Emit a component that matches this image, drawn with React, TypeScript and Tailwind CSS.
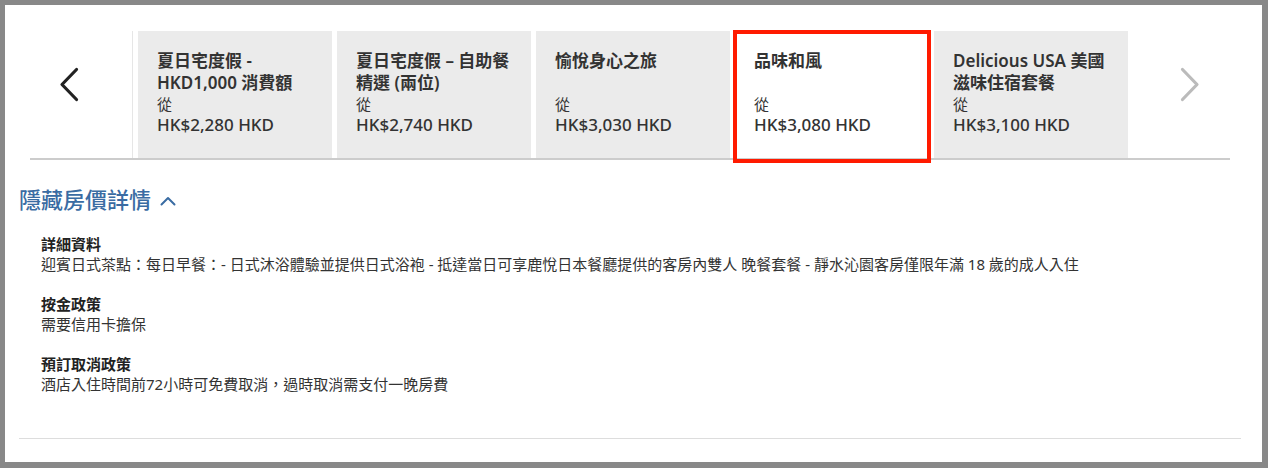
import React from 'react'

type Offer = {
  title: string
  price: string
  selected?: boolean
}

const offers: Offer[] = [
  { title: '夏日宅度假 - HKD1,000 消費額', price: 'HK$2,280 HKD' },
  { title: '夏日宅度假 – 自助餐精選 (兩位)', price: 'HK$2,740 HKD' },
  { title: '愉悅身心之旅', price: 'HK$3,030 HKD' },
  { title: '品味和風', price: 'HK$3,080 HKD', selected: true },
  { title: 'Delicious USA 美國滋味住宿套餐', price: 'HK$3,100 HKD' },
]

const details = [
  {
    label: '詳細資料',
    text: '迎賓日式茶點：每日早餐：- 日式沐浴體驗並提供日式浴袍 - 抵達當日可享鹿悅日本餐廳提供的客房內雙人 晚餐套餐 - 靜水沁園客房僅限年滿 18 歲的成人入住',
  },
  { label: '按金政策', text: '需要信用卡擔保' },
  { label: '預訂取消政策', text: '酒店入住時間前72小時可免費取消，過時取消需支付一晚房費' },
]

function Chevron({ dir, color }: { dir: 'left' | 'right'; color: string }) {
  const points = dir === 'left' ? '17.5,2.5 3,17.5 17.5,32.5' : '2.5,2.5 17,17.5 2.5,32.5'
  return (
    <svg width="20" height="35" viewBox="0 0 20 35" fill="none">
      <polyline points={points} stroke={color} strokeWidth="3.2" strokeLinecap="round" strokeLinejoin="round" />
    </svg>
  )
}

function OfferCard({ offer }: { offer: Offer }) {
  return (
    <div className={`relative w-[194px] h-[127px] shrink-0 pt-[19px] px-[19px] text-[#333] ${offer.selected ? 'bg-white' : 'bg-[#ebebeb]'}`}>
      <div className="h-[44px] text-[17px] leading-[22px] font-semibold">{offer.title}</div>
      <div className="text-[15px] leading-[20px]">從</div>
      <div className="text-[17px] leading-[22px] font-medium">{offer.price}</div>
      {offer.selected && (
        <div className="absolute -left-[2px] -top-[1px] w-[198px] h-[133px] border-4 border-[#ff1a00]"></div>
      )}
    </div>
  )
}

export default function App() {
  return (
    <div
      className="w-[1268px] h-[468px] bg-white border-[#888888] border-l-[5px] border-t-[5px] border-r-[6px] border-b-[6px] box-border"
      style={{ fontFamily: '"Noto Sans", "Noto Sans CJK TC", sans-serif' }}
    >
      {/* Offer carousel */}
      <div className="ml-[25px] mt-[26px] w-[1200px] flex border-b-2 border-[#cccccc]">
        <div className="w-[102px] pl-[29px] pt-[36px]">
          <Chevron dir="left" color="#222222" />
        </div>
        <div className="w-px bg-[#e6e6e6]"></div>
        <div className="ml-[5px] flex gap-[5px]">
          {offers.map((o) => (
            <OfferCard key={o.title} offer={o} />
          ))}
        </div>
        <div className="flex-1 pl-[52px] pt-[36px]">
          <Chevron dir="right" color="#bbbbbb" />
        </div>
      </div>

      {/* Rate details */}
      <div className="ml-[14px] mt-[24px]">
        <div className="flex items-center h-[30px] text-[22px] font-medium text-[#3a6ca3]">
          <span>隱藏房價詳情</span>
          <svg className="ml-[9px] mt-[3px]" width="16" height="10" viewBox="0 0 16 10" fill="none">
            <polyline points="1.5,8.5 8,2 14.5,8.5" stroke="#3a6ca3" strokeWidth="2" strokeLinecap="round" strokeLinejoin="round" />
          </svg>
        </div>
        <div className="ml-[22px] mt-[20px] flex flex-col gap-[20px] text-[15px] leading-[20px] text-[#333]">
          {details.map((d) => (
            <div key={d.label}>
              <div className="font-semibold text-[#222]">{d.label}</div>
              <div>{d.text}</div>
            </div>
          ))}
        </div>
      </div>

      <div className="ml-[14px] mt-[44px] w-[1222px] h-px bg-[#dddddd]"></div>
    </div>
  )
}
